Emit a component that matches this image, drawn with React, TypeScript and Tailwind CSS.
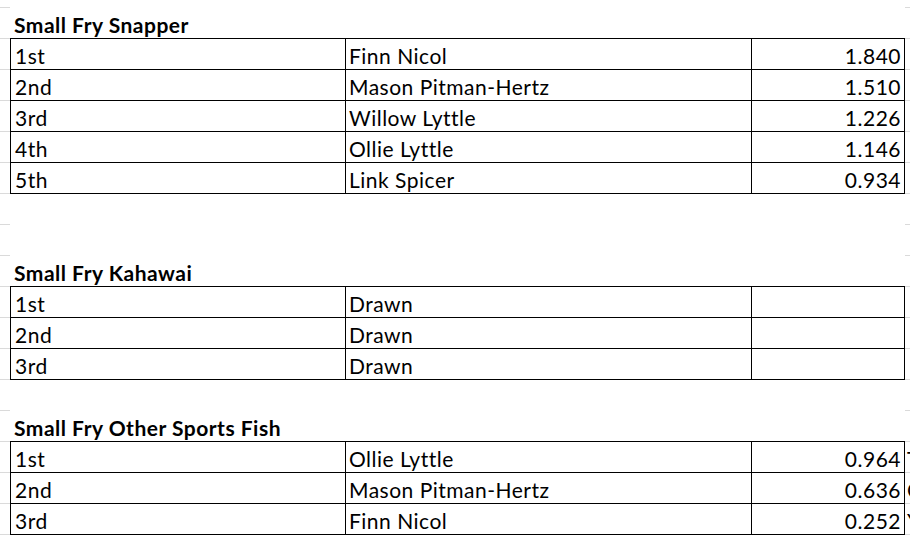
import React from 'react';

type Entry = { place: string; name: string; weight?: string; spill?: string };

const snapper: Entry[] = [
  { place: '1st', name: 'Finn Nicol', weight: '1.840' },
  { place: '2nd', name: 'Mason Pitman-Hertz', weight: '1.510' },
  { place: '3rd', name: 'Willow Lyttle', weight: '1.226' },
  { place: '4th', name: 'Ollie Lyttle', weight: '1.146' },
  { place: '5th', name: 'Link Spicer', weight: '0.934' },
];

const kahawai: Entry[] = [
  { place: '1st', name: 'Drawn' },
  { place: '2nd', name: 'Drawn' },
  { place: '3rd', name: 'Drawn' },
];

const otherSports: Entry[] = [
  { place: '1st', name: 'Ollie Lyttle', weight: '0.964', spill: 'T' },
  { place: '2nd', name: 'Mason Pitman-Hertz', weight: '0.636', spill: 'C' },
  { place: '3rd', name: 'Finn Nicol', weight: '0.252', spill: 'Y' },
];

const rowGrid = 'grid grid-cols-[10px_335px_406px_154px_5px] h-[31px]';
const tick = 'border-b border-[#dadada]';
const cellText = 'flex items-end pb-[3px] leading-none whitespace-nowrap overflow-hidden';

const BlankRow: React.FC = () => (
  <div className={rowGrid}>
    <div className={tick} />
    <div className="col-span-3" />
    <div className={tick} />
  </div>
);

const HeadingRow: React.FC<{ title: string }> = ({ title }) => (
  <div className={rowGrid}>
    <div className={tick} />
    <div className={`col-span-3 border-b border-black pl-[4px] font-bold ${cellText}`}>{title}</div>
    <div className={tick} />
  </div>
);

const DataRow: React.FC<{ entry: Entry }> = ({ entry }) => (
  <div className={rowGrid}>
    <div className={tick} />
    <div className={`border-l border-b border-black pl-[4px] ${cellText}`}>{entry.place}</div>
    <div className={`border-l border-b border-black pl-[3px] ${cellText}`}>{entry.name}</div>
    <div className={`border-l border-r border-b border-black pr-[3px] justify-end ${cellText}`}>{entry.weight}</div>
    <div className={`${tick} pl-[2px] ${cellText}`}>{entry.spill}</div>
  </div>
);

const Section: React.FC<{ title: string; entries: Entry[] }> = ({ title, entries }) => (
  <>
    <HeadingRow title={title} />
    {entries.map((e) => (
      <DataRow key={e.place} entry={e} />
    ))}
  </>
);

const App: React.FC = () => {
  return (
    <div className="w-[910px] h-[540px] overflow-hidden bg-white text-black text-[21px] tracking-[0.5px] font-['Lato',sans-serif]">
      {/* partial row above the first heading */}
      <div className="grid grid-cols-[10px_895px_5px] h-[8px]">
        <div className={tick} />
        <div />
        <div className={tick} />
      </div>

      <Section title="Small Fry Snapper" entries={snapper} />
      <BlankRow />
      <BlankRow />
      <Section title="Small Fry Kahawai" entries={kahawai} />
      <BlankRow />
      <Section title="Small Fry Other Sports Fish" entries={otherSports} />
    </div>
  );
};

export default App;
